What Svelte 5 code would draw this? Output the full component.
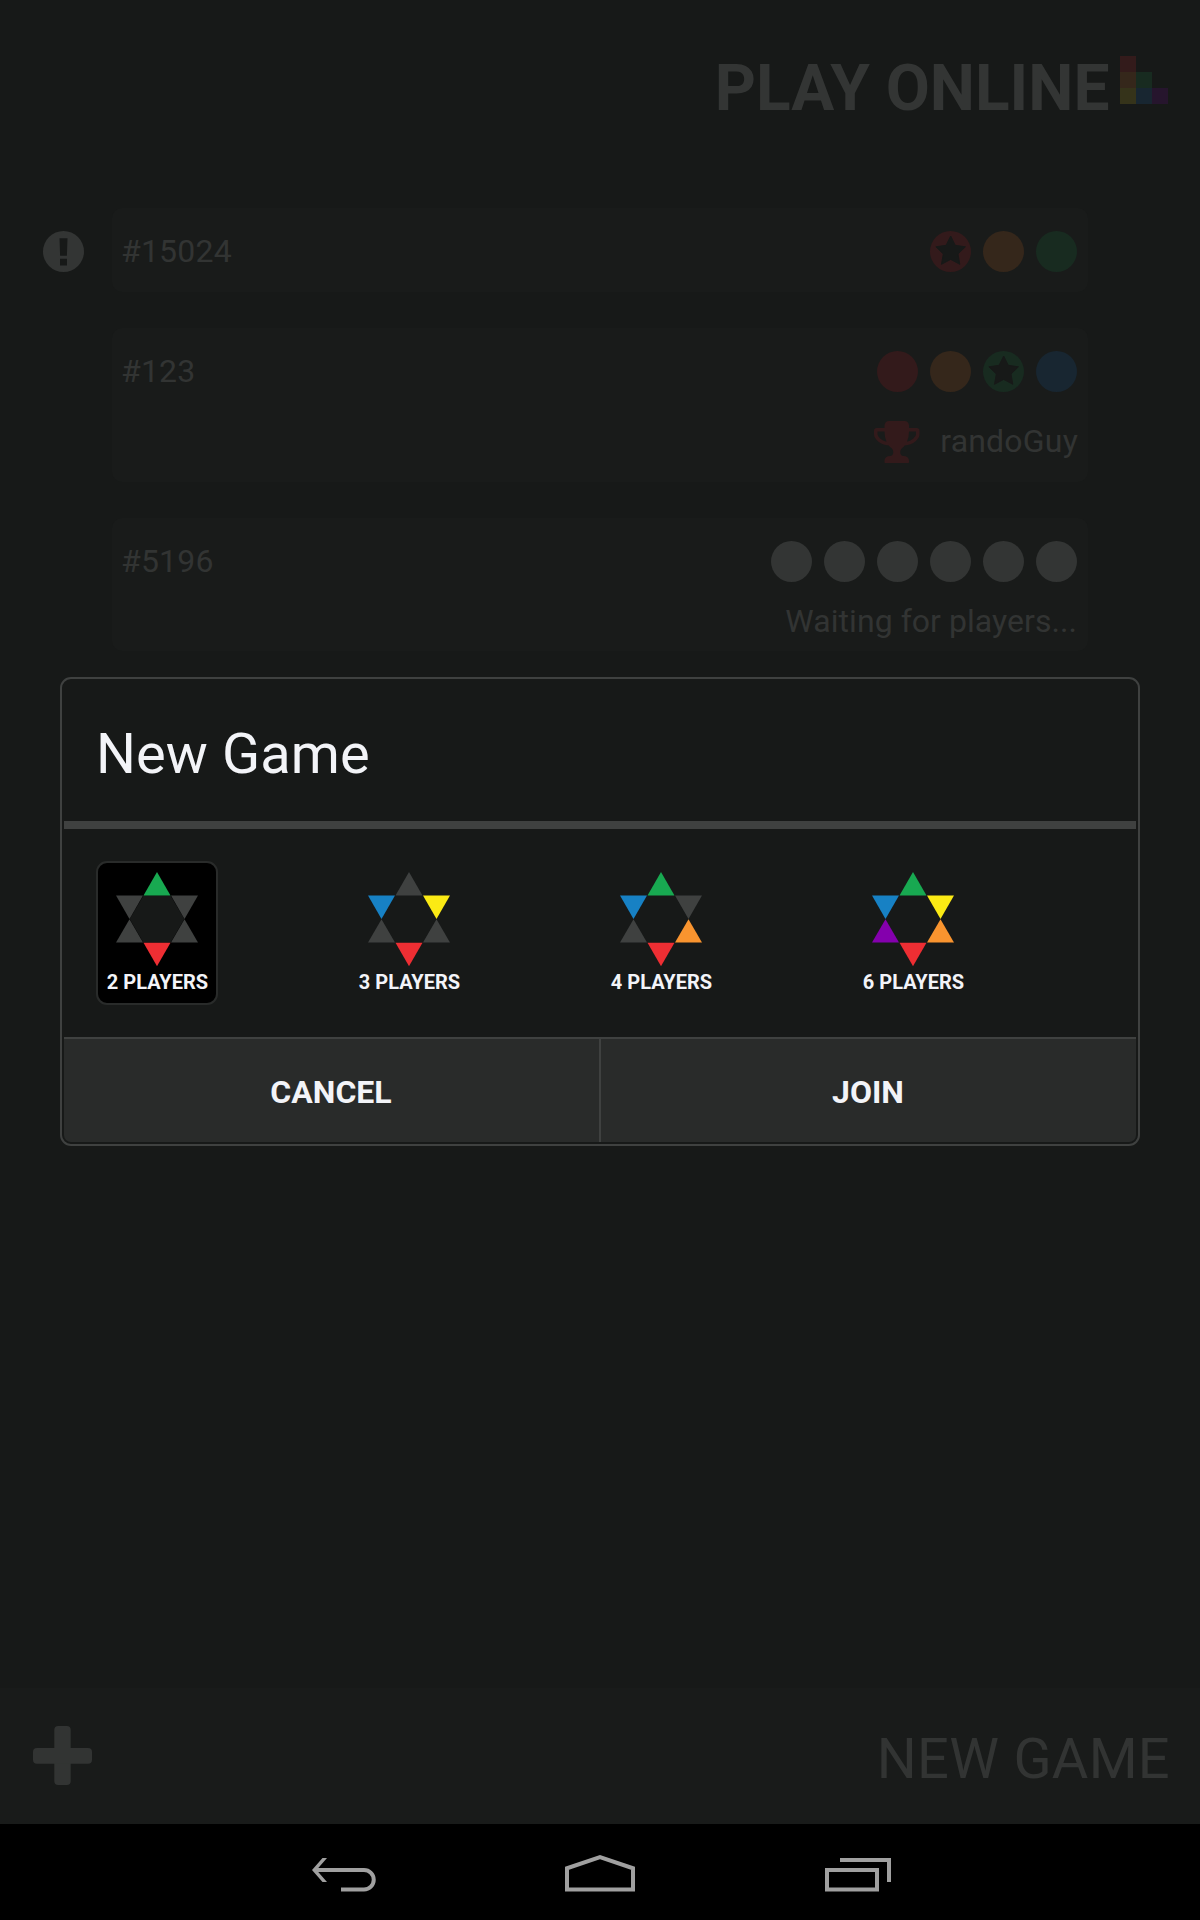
<script>
  const C = {
    red: '#ee2e33', orange: '#f9942f', green: '#18a951',
    blue: '#1781c4', yellow: '#fbea14', purple: '#8400ad', off: '#3f4140'
  };

  const games = [
    { id: '#15024', alert: true, pieces: ['red', 'orange', 'green'], star: 0 },
    { id: '#123', pieces: ['red', 'orange', 'green', 'blue'], star: 2, winner: 'randoGuy' },
    { id: '#5196', pieces: ['idle', 'idle', 'idle', 'idle', 'idle', 'idle'], star: -1, status: 'Waiting for players...' }
  ];

  // Triangles of the board star, clockwise from the top.
  const points = [
    '41,0 54.5,23.4 27.5,23.4',
    '55,23.6 82,23.6 68.5,47',
    '68.5,47.2 82,70.6 55,70.6',
    '27.5,70.8 54.5,70.8 41,94.2',
    '13.5,47.2 27,70.6 0,70.6',
    '0,23.6 27,23.6 13.5,47'
  ];

  const options = [
    { label: '2 PLAYERS', seats: ['green', 'off', 'off', 'red', 'off', 'off'] },
    { label: '3 PLAYERS', seats: ['off', 'yellow', 'off', 'red', 'off', 'blue'] },
    { label: '4 PLAYERS', seats: ['green', 'off', 'orange', 'red', 'off', 'blue'] },
    { label: '6 PLAYERS', seats: ['green', 'yellow', 'orange', 'red', 'purple', 'blue'] }
  ];

  let selected = $state(0);
</script>

<div class="screen">
  <header>
    <h1>PLAY ONLINE</h1>
    <svg class="logo" viewBox="0 0 3 3" shape-rendering="crispEdges">
      <rect width="1" height="1" fill="#331b1b" />
      <rect y="1" width="1" height="1" fill="#35271b" />
      <rect x="1" y="1" width="1" height="1" fill="#182b20" />
      <rect y="2" width="1" height="1" fill="#35331a" />
      <rect x="1" y="2" width="1" height="1" fill="#182631" />
      <rect x="2" y="2" width="1" height="1" fill="#26152d" />
    </svg>
  </header>

  <main>
    {#each games as g}
      <div class="row">
        <div class="flag">
          {#if g.alert}
            <svg width="41" height="41" viewBox="0 0 41 41">
              <circle cx="20.5" cy="20.5" r="20.5" fill="#333534" />
              <path d="M16.5 7.2h8l-.6 17.6h-6.8zM17 27.8h7v6.8h-7z" fill="#171918" />
            </svg>
          {/if}
        </div>
        <section class="card">
          <div class="line">
            <span>{g.id}</span>
            <div class="pieces">
              {#each g.pieces as p, i}
                <svg class={p} width="41" height="41" viewBox="0 0 41 41">
                  <circle cx="20.5" cy="20.5" r="20.5" />
                  {#if i === g.star}
                    <path class="star" d="M20.7 5l4.5 9.3 10.2 1.5-7.4 7.2 1.8 10.3-9.1-4.9-9.2 4.9 1.8-10.3-7.4-7.2 10.2-1.5z" />
                  {/if}
                </svg>
              {/each}
            </div>
          </div>
          {#if g.winner}
            <div class="line winner">
              <svg width="45.5" height="42" viewBox="64 128 1664 1536">
                <path fill="#331a1b" d="M522 883q-74-162-74-371h-256v96q0 78 94.5 162t235.5 113zm1078-275v-96h-256q0 209-74 371 141-29 235.5-113t94.5-162zm128-128v128q0 71-41.5 143t-112 130-173 97.5-215.5 44.5q-42 54-95 95-38 34-52.5 72.5t-14.5 89.5q0 54 30.5 91t97.5 37q75 0 133.5 45.5t58.5 114.5v64q0 14-9 23t-23 9h-832q-14 0-23-9t-9-23v-64q0-69 58.5-114.5t133.5-45.5q67 0 97.5-37t30.5-91q0-51-14.5-89.5t-52.5-72.5q-53-41-95-95-113-5-215.5-44.5t-173-97.5-112-130-41.5-143v-128q0-40 28-68t68-28h288v-96q0-66 47-113t113-47h576q66 0 113 47t47 113v96h288q40 0 68 28t28 68z" />
              </svg>
              <span>{g.winner}</span>
            </div>
          {/if}
          {#if g.status}
            <div class="line status"><span>{g.status}</span></div>
          {/if}
        </section>
      </div>
    {/each}
  </main>

  <footer>
    <svg width="59" height="59" viewBox="0 0 59 59" fill="#323433">
      <rect x="21.3" width="16.4" height="59" rx="4" />
      <rect y="22" width="59" height="15.7" rx="4" />
    </svg>
    <span>NEW GAME</span>
  </footer>

  <nav>
    <svg width="70" height="42" viewBox="0 0 70 42">
      <path d="M7 18H56a9.75 9.75 0 0 1 0 19.5H33" />
      <path class="head" d="M4 18L14.5 6H19L8.5 18L19 30H14.5z" />
    </svg>
    <svg width="70" height="42" viewBox="0 0 70 42">
      <path d="M2 37.5V16.3L35 5L68 16.3V37.5z" />
    </svg>
    <svg width="70" height="42" viewBox="0 0 70 42">
      <path d="M5 18H55V37.5H5zM18 8H67V30" />
    </svg>
  </nav>

  <div class="dialog" role="dialog" aria-label="New Game">
    <h2>New Game</h2>
    <div class="options">
      {#each options as o, i}
        <button class="option" class:selected={i === selected} onclick={() => (selected = i)}>
          <svg width="82" height="94.2" viewBox="0 0 82 94.2">
            <polygon points="27.5,23.5 54.5,23.5 68.3,47.1 54.5,70.7 27.5,70.7 13.7,47.1" fill="#171918" />
            {#each o.seats as s, k}
              <polygon points={points[k]} fill={C[s]} />
            {/each}
          </svg>
          <span>{o.label}</span>
        </button>
      {/each}
    </div>
    <div class="actions">
      <button>CANCEL</button>
      <button>JOIN</button>
    </div>
  </div>
</div>

<style>
  :global(body) { margin: 0; background: #171918; }
  .screen {
    position: relative;
    display: flex;
    flex-direction: column;
    width: 1200px;
    height: 1920px;
    overflow: hidden;
    background: #171918;
    color: #323433;
    font-family: Roboto, "Liberation Sans", sans-serif;
    font-size: 32px;
    line-height: 40px;
  }
  svg { display: block; flex: none; }
  button {
    margin: 0;
    border: 0;
    background: none;
    font: inherit;
    color: #f3f4f8;
  }
  header {
    display: flex;
    justify-content: flex-end;
    align-items: flex-start;
    gap: 10.5px;
    height: 152px;
    padding: 56px 32px 0 0;
    box-sizing: content-box;
  }
  h1 {
    margin: 0;
    font-size: 64px;
    line-height: 66px;
    font-weight: 700;
    color: #333534;
  }
  .logo { width: 48px; height: 48px; }
  main {
    flex: 1;
    display: flex;
    flex-direction: column;
    gap: 36px;
  }
  .row { display: flex; }
  .flag { width: 69px; padding: 23px 0 0 43px; }
  .card {
    box-sizing: border-box;
    width: 976px;
    padding: 23px 10px 20px 9px;
    border-radius: 10px;
    background: #191b1a;
  }
  .line {
    display: flex;
    justify-content: space-between;
    align-items: center;
    height: 41px;
    letter-spacing: 0.2px;
  }
  .line > span { padding-bottom: 2px; }
  .pieces { display: flex; gap: 12px; padding-right: 1px; }
  .winner { justify-content: flex-end; gap: 20.5px; margin-top: 29px; }
  .status {
    justify-content: flex-end;
    margin-top: 19px;
    margin-bottom: -11px;
    padding-right: 1px;
    letter-spacing: 0.05px;
  }
  .red { fill: #331a1b; }
  .orange { fill: #35271b; }
  .green { fill: #182b20; }
  .blue { fill: #182631; }
  .idle { fill: #333534; }
  .star { fill: #171918; stroke: #171918; stroke-linejoin: round; }
  footer {
    display: flex;
    justify-content: space-between;
    align-items: center;
    box-sizing: border-box;
    height: 136px;
    padding: 0 30px 1px 33px;
    background: #191b1a;
    font-size: 56px;
    line-height: 64px;
    letter-spacing: 0.3px;
  }
  footer span { padding-top: 6px; }
  nav {
    display: flex;
    justify-content: center;
    gap: 187px;
    box-sizing: border-box;
    height: 96px;
    padding-top: 28px;
    background: #000;
  }
  nav path { fill: none; stroke: #a0a0a0; stroke-width: 4; }
  nav .head { fill: #a0a0a0; stroke: none; }
  .dialog {
    position: absolute;
    left: 60px;
    top: 677px;
    box-sizing: border-box;
    width: 1080px;
    height: 469px;
    padding: 2px;
    display: flex;
    flex-direction: column;
    border: 2px solid #3f4140;
    border-radius: 11px;
    background: #171918;
    color: #f3f4f8;
  }
  h2 {
    margin: 0;
    height: 140px;
    padding-left: 32px;
    border-bottom: 8px solid #3f4140;
    font-size: 56px;
    line-height: 146px;
    font-weight: 400;
    letter-spacing: 0.1px;
  }
  .options {
    flex: 1;
    display: flex;
    gap: 130px;
    padding: 32px 0 0 32px;
  }
  .option {
    display: flex;
    flex-direction: column;
    align-items: center;
    box-sizing: border-box;
    width: 122px;
    height: 144px;
    padding: 9px 1px 0 0;
    border: 2px solid transparent;
    border-radius: 11px;
    font-size: 20px;
    line-height: 24px;
    font-weight: 700;
    white-space: nowrap;
  }
  .option span { margin-top: 4px; padding-left: 2px; }
  .option.selected { background: #000; border-color: #292b2a; }
  .actions {
    display: flex;
    height: 103px;
    border-top: 2px solid #3f4140;
    border-radius: 0 0 7px 7px;
    overflow: hidden;
    background: #292b2a;
  }
  .actions button { flex: 1; padding: 2px 1px 0 0; font-weight: 700; }
  .actions button + button { border-left: 2px solid #3f4140; }
</style>
